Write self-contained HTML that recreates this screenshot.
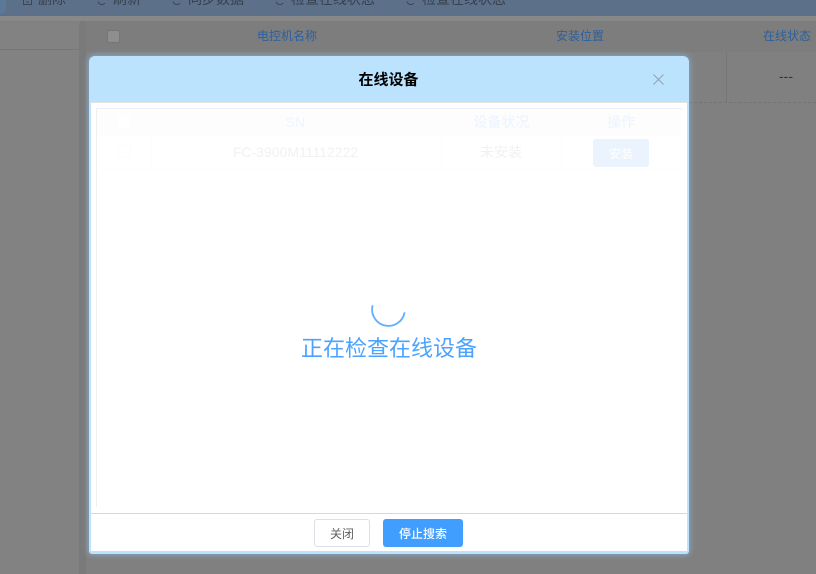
<!DOCTYPE html>
<html><head><meta charset="utf-8">
<style>
html,body{margin:0;padding:0;width:816px;height:574px;overflow:hidden;background:#808080}
body{position:relative;font-family:"Liberation Sans","Noto Sans CJK SC",sans-serif}
.a{position:absolute}
.t{position:absolute;white-space:nowrap;line-height:1;transform:translate(-50%,-50%)}
</style></head><body>
<!-- toolbar -->
<div class="a" style="left:0;top:0;width:816px;height:16px;background:#5c708a"></div>
<div class="a" style="left:0;top:0;width:6px;height:13px;background:#5a7898;border-radius:0 0 3px 0"></div>
<div class="a" style="left:0;top:16px;width:816px;height:5px;background:#888"></div>
<svg class="a" style="left:0;top:0" width="420" height="16" fill="none" stroke="#3c4654" stroke-width="1">
<path d="M23.500 0V4.500H31.500V0M26 2H29"/>
<path d="M105 3A4 4 0 0 1 98 1.500"/>
<path d="M180 3A4 4 0 0 1 173 1.500"/>
<path d="M283 3A4 4 0 0 1 276 1.500"/>
<path d="M414 3A4 4 0 0 1 407 1.500"/>
</svg>
<div class="t" style="left:52px;top:-1px;font-size:14px;color:#36404e">删除</div>
<div class="t" style="left:127px;top:-1px;font-size:14px;color:#36404e">刷新</div>
<div class="t" style="left:216px;top:-1px;font-size:14px;color:#36404e">同步数据</div>
<div class="t" style="left:333px;top:-1px;font-size:14px;color:#36404e">检查在线状态</div>
<div class="t" style="left:464px;top:-1px;font-size:14px;color:#36404e">检查在线状态</div>
<!-- left panel -->
<div class="a" style="left:0;top:23px;width:79px;height:551px;background:#828282;border-right:1px solid #7a7a7a;border-radius:0 3px 0 0"></div>
<div class="a" style="left:0;top:49px;width:79px;height:1px;background:#777"></div>
<div class="a" style="left:80px;top:21px;width:6px;height:553px;background:#7a7a7a"></div>
<!-- main table -->
<div class="a" style="left:86px;top:21px;width:730px;height:31px;background:#7d7d7d"></div>
<div class="a" style="left:107px;top:30px;width:11px;height:11px;background:#8e8e8e;border:1px solid #767676;border-radius:2px"></div>
<div class="t" style="left:287px;top:35.500px;font-size:12px;color:#2c5f9e">电控机名称</div>
<div class="t" style="left:580px;top:35.500px;font-size:12px;color:#2c5f9e">安装位置</div>
<div class="t" style="left:787px;top:35.500px;font-size:12px;color:#2c5f9e">在线状态</div>
<div class="a" style="left:726px;top:52px;width:1px;height:50px;background:#767676"></div>
<div class="a" style="left:689px;top:102px;width:127px;border-top:1px dashed #747474"></div>
<div class="t" style="left:786px;top:76px;font-size:14px;color:#333">---</div>
<!-- dialog -->
<div class="a" style="left:89px;top:56px;width:600px;height:498px;background:#bbe3fe;border-radius:6px 6px 3px 3px;box-shadow:0 0 6px 1px rgba(140,200,250,.55)"></div>
<div class="a" style="left:91px;top:102px;width:596px;height:449px;background:#fff;border-top:1px solid #e4e2dc;box-sizing:border-box"></div>
<div class="t" style="left:388.500px;top:80px;font-size:15px;font-weight:bold;color:#000">在线设备</div>
<svg class="a" style="left:652px;top:73px" width="13" height="13" fill="none" stroke="#959fa9" stroke-width="1"><path d="M1.500 1.500L11.500 11.500M11.500 1.500L1.500 11.500"/></svg>
<!-- inner table -->
<div class="a" style="left:96px;top:108px;width:586px;height:1px;background:#f0eff8"></div>
<div class="a" style="left:96px;top:108px;width:1px;height:399px;background:#f0f0f4"></div>
<div class="a" style="left:97px;top:109px;width:585px;height:27px;background:#fdfdfe"></div>
<div class="a" style="left:118px;top:116px;width:12px;height:12px;background:#fff;border-radius:2px"></div>
<div class="a" style="left:118px;top:145px;width:11px;height:11px;border:1px solid #fcfcfc;border-radius:2px"></div>
<div class="a" style="left:151px;top:136px;width:1px;height:32px;background:#fdfdfd"></div>
<div class="a" style="left:441px;top:136px;width:1px;height:32px;background:#fdfdfd"></div>
<div class="a" style="left:561px;top:136px;width:1px;height:32px;background:#fdfdfd"></div>
<div class="a" style="left:97px;top:168px;width:585px;height:1px;background:#fdfdfd"></div>
<div class="t" style="left:295.500px;top:122px;font-size:14px;color:#eef5fe">SN</div>
<div class="t" style="left:501.500px;top:122px;font-size:14px;font-weight:500;color:#eef5fe">设备状况</div>
<div class="t" style="left:621px;top:122px;font-size:14px;font-weight:500;color:#eef5fe">操作</div>
<div class="t" style="left:295.500px;top:152px;font-size:14px;color:#f1f1f1">FC-3900M11112222</div>
<div class="t" style="left:501px;top:152px;font-size:14px;color:#f1f1f1">未安装</div>
<div class="a" style="left:593px;top:139px;width:56px;height:28px;background:#ebf3fe;border-radius:3px"></div>
<div class="t" style="left:621px;top:153.500px;font-size:12px;font-weight:500;color:#fcfdff">安装</div>
<!-- spinner -->
<svg class="a" style="left:360px;top:290px" width="60" height="45" fill="none" stroke="#62aeff" stroke-width="1.800" stroke-linecap="round"><path d="M12.500 16A16 16 0 0 0 44.500 23"/></svg>
<div class="t" style="left:389px;top:349px;font-size:22px;color:#4ba3ff">正在检查在线设备</div>
<!-- footer -->
<div class="a" style="left:91px;top:513px;width:596px;height:1px;background:#d8d8d8"></div>
<div class="a" style="left:314px;top:519px;width:56px;height:28px;box-sizing:border-box;border:1px solid #dcdfe6;border-radius:3px;background:#fff"></div>
<div class="t" style="left:342px;top:533.500px;font-size:12px;color:#606266">关闭</div>
<div class="a" style="left:383px;top:519px;width:80px;height:28px;background:#409eff;border-radius:3px"></div>
<div class="t" style="left:423px;top:533.500px;font-size:12px;font-weight:500;color:#fff">停止搜索</div>
</body></html>
